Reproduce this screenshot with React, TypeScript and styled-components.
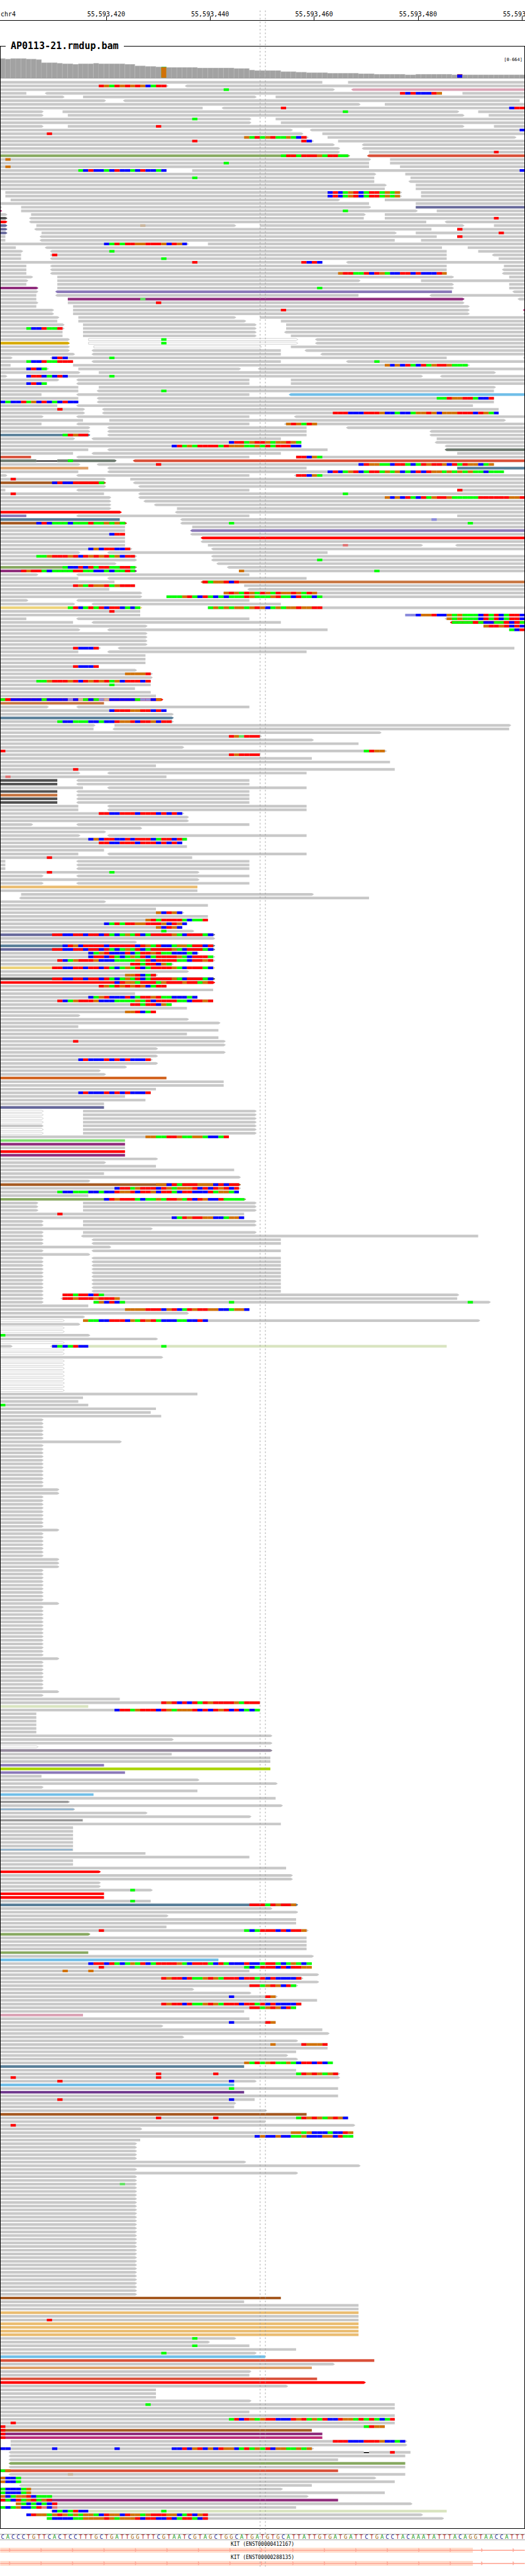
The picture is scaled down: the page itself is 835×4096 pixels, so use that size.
import React from 'react';
import styled, { createGlobalStyle } from 'styled-components';

const GlobalStyle = createGlobalStyle`
  * { box-sizing: border-box; }
  body {
    margin: 0;
    background: #fff;
    color: #000;
    font-family: "DejaVu Sans Mono", "Liberation Mono", monospace;
  }
`;

const Page = styled.main`
  position: relative;
  width: 100%;
  overflow: hidden;
  padding-bottom: 16px;
`;

const Ruler = styled.header`
  display: grid;
  grid-template-columns: 10.32% repeat(5, 19.8%);
  height: 33px;
  padding-top: 17px;
  border-bottom: 1px solid #000;
  overflow: hidden;
  font-size: 10px;
  line-height: 12px;
`;

const Chromosome = styled.span`
  padding-left: 1px;
`;

const Tick = styled.span`
  position: relative;
  text-align: center;

  &::after {
    content: "";
    position: absolute;
    left: 50%;
    bottom: 0;
    width: 1px;
    height: 6px;
    background: #000;
  }
`;

const Track = styled.fieldset`
  position: relative;
  min-width: 0;
  margin: 31px 0 0;
  padding: 0;
  border: 1px solid #000;
`;

const TrackName = styled.legend`
  margin-left: 8px;
  padding: 0 8px;
  font-size: 15px;
  font-weight: 700;
  line-height: 18px;
`;

const Range = styled.span`
  position: absolute;
  top: 8px;
  right: 3px;
  font-size: 7px;
  line-height: 10px;
`;

const Chart = styled.svg`
  display: block;
  width: 100%;
  height: auto;
`;

const Guides = styled.svg`
  position: absolute;
  top: 0;
  left: 0;
  width: 100%;
  height: auto;
  pointer-events: none;
`;

const Sequence = styled.div`
  display: grid;
  grid-template-columns: repeat(101, 1fr);
  margin-top: 8px;
  border-top: 1px solid #a6a6a6;
  border-bottom: 1px solid #a6a6a6;
  font-size: 9px;
  line-height: 8px;
  text-align: center;
`;

const Base = styled.span<{ $base: string }>`
  min-width: 0;
  color: ${({ $base }) => SEQUENCE_COLORS[$base]};
`;

const Genes = styled.section`
  display: flex;
  flex-direction: column;
  gap: 3px;
  margin-top: 2px;
`;

const Gene = styled.div`
  font-size: 8px;
  line-height: 10px;
  text-align: center;
`;

const SEQUENCE_COLORS: Record<string, string> = {
  A: '#139a13',
  C: '#14148c',
  G: '#a4660c',
  T: '#b01414',
};

const MISMATCH_COLORS: Record<string, string> = {
  A: '#00ff00',
  C: '#0000ff',
  G: '#d17105',
  T: '#ff0000',
  a: '#64e464',
  c: '#8c8cdc',
  g: '#c9b59c',
  t: '#e07676',
};

const PLAIN = '#c8c8c8';

const READ_COLORS: Record<string, string> = {
  pink: '#dba3b5',
  tomato: '#d94f38',
  green: '#87a960',
  slate: '#66689b',
  dark: '#525252',
  red: '#ff0000',
  violet: '#8a78b8',
  plum: '#8f2d7c',
  rose: '#bc2e78',
  gold: '#d6a900',
  steel: '#597f99',
  moss: '#6d7a6f',
  peach: '#dea068',
  brown: '#a55a22',
  copper: '#c7743f',
  yellow: '#edd37a',
  sand: '#eabc70',
  rust: '#d26522',
  mint: '#80df70',
  pale: '#d9e4c0',
  sky: '#6fbee8',
  mauve: '#94899c',
  lime: '#aad400',
  purple: '#6e368c',
};

// Reads drawn with a plain outline round another fill.
const OUTLINED: Record<string, string> = {
  open: '#ffffff',
  ash: '#8f8f8f',
  ice: '#90b4d0',
};

// One line per pileup row. "a-b" is a read from base a to base b, with < or >
// for its direction and :name for its colour; "a~b" is a deletion; "@kXYZ"
// puts mismatched bases from base k on; "nx" repeats the row n times.
const PILEUP = `
0-62 67-101
0-32> <36-101 @19TGATGTGTGCATT
0-64> <68-101:pink @43A
0-5 <9-85 89-101 @77TCTCCCTG
0-12> 16-49> 53-101
0-20> <24-100
0-69> 74-101
0-39 <43-101 @54T @98CTT
0-8> 12-88> 92-101 @66A
0-8> 13-89> 94-101
0-48> 53-101 @37A
0-48> 54-101
0-8> 13-89> 95-101 @30T
0-56> <60-101 @100C
0-58> 62-101 @9T
0-59> 63-99> @47GATAGTAAGACT
0-60> 65-101 @37T @58TC
0-64> <70-101
0-65> <70-101
0-65> 71-101 @95T
0-67>:green <71-101:tomato @54ATTATTTGATTAA
0-71> 75-101 @1G
0-71 75-101 @43A
0-71 77-101 @1G
0-32 37-101 @15ACTCCACTCCACTCCAC @100C
0-72> 78-101
0-72 79-101 @37A
0-72 <79-101
0-74> 80-101
0-74 80-101
2x 1-77> 81-101 @63CTCAGTCATTAGAG
2-65> 74-101
0-71 80-101
0-0> 4-71> 80-101:slate
0-0>:rose 4-80> 84-101 @66A
0-1> 6-70> 74-101
0-1>:dark <6-70 74-101 @95T
0-1>:red <6-82 <86-101
0-1>:slate 7-45> 50-89> 95-101 @27g
0-1>:slate <7-83 88-101 @88T
0-1>:slate 8-76> 80-101 @96T
0-1 <8-84 88-101 @88T
0-1 <8-76 81-101
0-36> 40-101 @20CATATTGGTTTGCTGC
0-3 <9-85 90-101
0-4> <10-86 92-101 @21A
0-4 <10-86 <95-101 @10T
0-4 <10-86 96-101 @31A
0-62 <67-101 @37T @58TCTC
0-5 <10-86 97-101
0-5 <10-86 <97-101
0-5 <10-86 <97-101 @65GTTAATCTGACCTTCTCCCTG
0-6> 11-87> 98-101
0-5> 11-69> 81-101
0-5 11-87> 98-101
0-7>:plum 11-87> 98-101 @61A
0-7> <11-87:violet <99-101
0-7 <11-69 <83-101
0-7 13-89>:plum <100-101 @27a
0-7> 13-89> @30T
0-7 14-90>
0-10> 14-90> <101-101:rose @54T
0-10> 14-90> <101-101
0-11> 15-45> 50-101
0-11 15-47> 54-101
0-12> 16-49> 55-101
0-12> 16-49> 55-101 @5ACCTAAT
0-12 16-49> <55-101
0-12 16-49> 56-101
0-13> 17-57>:open <61-101 @31A
0-13>:gold 17-57>:open <61-101 @31A
0-13> 18-50>:open 56-101
0-13> <18-54 <59-101
0-14> <18-54 <62-101
0-2> <10-86 <101-101 @10CTC @21A
0-14 <18-54 <67-101 @5ACCTAATTT @72A
0-2 14-90> @74GCGCTACTAGTTGAAA
0-9> 15-46> <50-101 @5CTCA
0-15> 19-95>
0-1> 5-81> <85-101 @5CTTCACTC @21A
0-11> <15-48 56-101
0-9 <15-48 56-101 @5CTCA
0-15 19-95>
0-15 <19-95 @31A
0-8 <15-48 <56-101:sky
0-15 <19-95 @84AATGGTTACCT
0-15 <19-95 @0CACCTAGCTCACTCC
0-11 <15-91
0-16> <20-96 @11T
0-16> <20-96 @64TTTCCCTTTGCCACCAGGTGCGGGTTTCTGAC
0-8> <15-48 <57-101
0-16 21-97>
0-8 <15-48 <55-101 @55GTGATG
0-17> <21-59 <67-101
0-17> <21-59 <83-101
0-17>:steel <21-59 <83-101 @12ATGTT
0-14> <18-54 84-101
0-58 <84-101 @44CTTAGTTGAGGTGA
0-58 <86-101 @33CTAGATTTTATGGGAAGATATTTCC
0-17 <21-63 <86-101:moss
0-14 <18-54 88-101
0-6:tomato <15-48 57-101 @57TTCGA
0-7:moss 7~11 11-22>:moss <26-101:tomato @13A
0-15> <19-95 @30T @69CTGGAACTTACATGTTGCTATGGCAG
0-17:peach <21-59 88-101:steel
0-15 <21-97 @63CTCAGTCATTAGAGCACTCTGGAGAGAGAACAAA
0-1> <15-48 <57-101 @57TTCGA
0-20> 25-101 @2T
0-20>:brown <26-101 @10CTCCTTTTTA
0-20> <27-101
0-1 <15-48 88-101 @88T
0-20 <27-101 @2T @66A
0-21> <27-101 @74GCGCTACTAGTTGAAAAATTTTTTGGT
0-21> <28-101
0-21> <30-101
0-21> 34-101
0-23>:red <34-101
0-5:violet <15-48 88-101
0-23:steel <35-101 @83c
0-24>:brown <35-101 @7CTCAAACAAATAAGAGA @44A @90A
0-24 37-101
0-24 <37-101:violet
0-24 <37-101 @21CTT
0-24 <39-101:red
0-24 <39-101
0-24 40-81> <88-101 @66t
0-25> <41-101 @17CGCTTCCT
0-15> <21-63
0-26> <41-101 @7AAGTTTGTCTGTGTAGCTT
0-26> <41-101 @61A
0-22> <42-101
0-26>:green <44-101 @12ACCTCTATTAATTA
0-26>:plum 46-101 @4TGTTACAAAATTAACCACAATA @46G @72A
0-7> <15-48
0-15 <21-59
0-22 <39-101:copper @39TAGGTCT
0-26 47-101 @14TGATGGTAGTTT
0-21 <48-101
0-27> 43-101 @43GTGATGATGATGGTGATG
0-27> 32-101 @32AAAGTACTACACAAATGAAAGTAACTAACA
0-5> <15-48
0-14> <18-54
0-27>:yellow 40-101 @13ATCATATCTTCACA @40AGAGAGGAGTGCAGAGGTGGTT
0-27 @21T
0-27 78-101 @78ccCGGTCCGAGAAACTATCATTC
0-5 <15-48 <86-101 @86GAGAAACTATCATTC
0-14 <18-54 <87-101:red @87AAAATACCAATCTA
0-28> 93-101 @93GTTGTCTC
0-15> <21-63 98-101 @98ACT
4x 0-28>
0-19> <23-99 @14TCCCT
0-15 <21-59
3x 0-28
0-19 @14TCCCT
0-26>
0-29> @24GGGGT
0-29>
0-29 @7AAGTTTGTCTGTGTAGCTTTCT
0-29 @21A
0-26
0-29
0-30
0-31>:red @0ATCCCCCCACCCCcCgACAcgCCCCCAccCG
0-20:copper
0-9> <15-48
0-32 @21CTTTGGTTCTC
0-33>
0-33>:steel
0-33> @11ACCAAACCACCTGGTCTTGCTT
0-18> 22-98>
0-18 <22-98
0-73>
0-50> @44TGaTTT
0-60>
0-69
0-35>
0-74> @0T @70ATGG
0-50 @44TGTTTT
0-60
0-75
0-30
0-76 @14T
0-15> <21-59
0-32 @1t
2x 0-11:dark <15-48
0-16 <21-59
0-11:dark <15-48
0-11:copper <15-48
2x 0-11:dark <15-48
2x 0-15 <21-59
0-35> @19TTCCTTTCTTTCTCTC
2x 0-36>
0-6> <15-48
0-27>
0-20>
0-15> <21-59
0-36 @17CGCTTCCTCTTTCATTCTA
0-35 @19TTCCTTTCTTTCTCTC
0-36
0-20
0-15 <21-59
0-37 @9T
3x 0-1 <15-48
0-38> @9T @21A
0-8> <15-48
0-38>
0-8> <15-48
0-38:sand
0-38
4-60>
<4-71
0-20>
0-40
0-30
0-35> @30GCTGC
0-40
0-40 @28GTATTTTACAAT
0-36 @20CATATTGGTTTGCTGC
0-35 @30GCTGC
0-37> @31A
0-41>:slate @10TTCCTTCTTCTACAGATCATTTTGACTTTAC
0-41>
0-26>
0-41>:steel @12CTGCTTTTCTTTTTCTGATCCAGGATTCT
0-41>:slate @10TTCCTTCTTCTACAGATCATTTTGACTTTAC
0-38> @17CAGTCCCTCATTGTAACCCAC
0-41> @17CTTCTACAGATCATTTTGACTTTA
0-41> @11TCAGTTTGCCCAAAAGATCTTTTAACTTGT
0-33> @25TTATTCGA
0-41>:yellow @10TTCCTTCTTCTACAGATCATTTTGACTTTAC
0-36>
0-30> @24GGTCAT
0-41>:dark @10TTCCTTCTTCTACAGATCATTTTGACTTTAC
0-41>:red @22CTGGATTTAGTTTGTTAGT
0-32 @19TGATGTGTGCATT
0-41
0-26
0-38 @17CAGTCCCTCATTGTAACCCAC
0-41 @11TCAGTTTGCCCAAAAGATCTTTTAACTTGT
0-33 @25TTATTCGA
0-36
0-30 @24GGTCAT
0-15>
0-36>
0-42>
0-15
0-42
0-36
0-42
0-43> @14T
0-43>
0-30>
0-43>
0-30>
0-29> @15CTCCCTCTCTCCCT
0-30>
0-24>
0-19>
0-20>
0-32:rust
2x 0-43
0-30
0-29 @15CTCCCTCTCTCCCT
0-24
0-28
0-20
0-20:slate
4x 0-8>:open 16-49>
0-8> 16-49>
2x 0-8>:open 16-49>
0-44 @28GGAATTGAAGGACCAT
0-24:mint
0-24:plum
0-24
0-24:red
0-24:plum
0-30>
0-20>
0-30
0-45
0-20
0-46>
0-17>
0-46>:brown @30GGCTATTTGGGCTCTT
0-46> @22CTTAGTTTCTGAGGGTCTCTGTCT
0-46 @11ACCAAACCACCTGGTCTTGCTTACTTCCCTAGGAC
0-17
0-47>:green @20CTGTTTACAAGATTGATCTGCCTAAAA
3x 0-7> 16-49>
0-47 @11T
0-47 @33CATGTTGGCCAGGC
2x 0-8> 16-49>
0-29>
0-8> 16-49>
0-8> <16-92
2x 0-8> <18-54
0-21>
0-8> <18-54
0-17>
10x 0-8> <18-54
0-8> 12-88> @12TTATTCTA
0-8> <12-88 @12TTGTTTGTTTG
0-8> 18-94> @18AGCTCA @44A @90A
0-17
0-48 @24GGGGTTTCGTCATGTTGGCCAGGC
0-36>
0-16>
0-12>:open 16-92> @16GAACCTTTCGATGTACCCAACCTC
0-15>
2x 0-12>:open
0-17> @0A
0-30>
0-12>:open
0-2> <10-86:pale @10CACATCC @31A
2x 0-12>:open
0-31>
9x 0-12>:open
0-38
0-16
0-15
0-17 @0A
0-30
0-29
0-31
6x 0-8>
0-23>
12x 0-8>
2x 0-11>
9x 0-8>
0-11>
7x 0-8>
3x 0-11>
9x 0-8>
0-11>
14x 0-8>
0-11>
8x 0-8>
0-11>
0-8>
0-23
0-50 @31TGTCTCTATGTTTTGATTT
0-17:pale
0-50 @22CTTAGTTTCTGAGGGTCTCTGTCTCACA
6x 0-7
0-52>
0-33>
0-52>
0-7>:open
0-52>:mauve
0-33
2x 0-52
0-20:violet
0-52:lime
0-24:violet
0-8
0-38>
0-53>
0-8>
0-38
0-18:sky
0-53
0-13>:ash
0-54>
0-14>:ice
0-28>
0-48>
0-16:ash
0-54
6x 0-14
0-14:ice
0-28
0-48
2x 0-14
0-55
0-19>:red
2x 0-56>
2x 0-19>
0-29> @25A
2x 0-20:red
0-29 @25A
0-57>:steel @48TTTATGTTG
0-52>
0-57>
0-32>
2x 0-57
0-32
0-59> @19T @47ACATTTCTCTTG
0-17>:green
4x 0-59
0-17:green
0-60>
0-42:sky
0-60 @17CTTCTACAGATCATTTTGACTTTACTACCCTCCATTACAGACA
0-60 @19T @47ACATTTCTCTTGG
0-48 @12G @17G
0-61>
0-58> @31TGTTCTAAGTGATTTCTTATCTCCCCT
0-61>
0-57> @48TTAGTGCTA
0-37>
0-48>
0-53> @44C @51TG
0-61
0-58 @31TGTTCTAAGTGATTTCTTATCTCCCCT
0-57 @48TTAGTGCTA
0-47
0-16:pink
0-48
0-53 @44C @51TG
0-31>
0-62
0-63>
0-35>
0-57>
0-63 @52G @58TGGGT
0-63
0-57
0-55>
0-57>
0-64 @47GATAGTAAGACTTCTCA
0-47:steel
0-57
0-65> @30T @41T @57ATGTGAGT
0-65> @2T @30T
0-49> @11T @44C
0-45:sky
0-65 @44A
0-47:purple
0-65
0-49 @11T @44C
0-45>
0-45
0-51>
0-59:brown
0-67 @30T @41T @57ATGTGAGTGC
0-51
0-68> @2T
0-27>
0-68 @56GGAGCCCACCTG
0-68 @49CGCCGCCAAGCCCGGCTAA
0-27
5x 0-26>
0-47>
0-69>
0-26>
0-57>
2x 0-26>
0-26> @23a
30x 0-26>
0-54:brown
0-47
2x 0-69
0-69:sand
0-69
0-69 @9T
4x 0-69:sand
0-45> @37A
0-40>
0-48 @37A
0-57
0-49> @31A
0-51:sky
0-72:tomato
0-64>
0-60:peach
0-48>
0-48
0-61:tomato
0-70>:red
0-55>
3x 0-30
0-48>
0-76 @28A
0-76
0-48
0-76
0-76 @44ATCTGAGTTCCCTGTAGATCCTGGATATACAT
0-76 @2T
0-74 @0T @70ATGG
0-60:brown @0T
0-62:plum @0T
0-62:rose @0T
2-78> @64TTTCCCTTTGCCAC
2-78>
0-60> @0CC @10C @22C @33CCTCGTCGCTGGCATAGATCGGAAGAG
<2-70 70~71 71-79 @75T
<2-78
<2-65
<2-78:green
<2-78
0-65:tomato @0AG
<2-78 @13g
0-72> @0GCCA
0-76 @0GCCA
<4-60
0-54> @0ACCCAG
0-74 @0ACCCAG
0-59> @0GCAGGTCAAA
0-65:plum @0TACTAGTAGT
3-79> @3GACACACT
0-57 @0ACAGCCATtCt
<10-86:pale @10CACATCC @31A
5-81> @5CTGGAGTGAGAGGACTGGCTGGAGTTTGGCATCGT
9-85> @9ACCCCAAGGGGTGAGGGTCTTCCTCATTACT
`;

const ROWS: string[][] = PILEUP.trim()
  .split('\n')
  .flatMap((line) => {
    const tokens = line.split(' ');
    const repeat = /^(\d+)x$/.exec(tokens[0]);
    return repeat
      ? Array.from({ length: Number(repeat[1]) }, () => tokens.slice(1))
      : [tokens];
  });

// [height, number of bases] runs of the coverage histogram.
const COVERAGE = [
  [37, 1], [36, 1], [37, 3], [36, 2], [35, 1], [29, 3], [28, 1], [27, 2], [26, 1],
  [27, 3], [28, 1], [27, 5], [26, 2], [23, 2], [22, 2], [21, 2], [20, 6], [19, 7],
  [18, 3], [15, 1], [14, 5], [12, 3], [11, 2], [10, 4], [9, 6], [8, 3], [7, 6],
  [6, 2], [7, 7], [6, 1], [7, 1], [6, 12],
].flatMap(([height, count]) => Array.from({ length: count }, () => height));

const VARIANTS: Record<number, { fill: string; tip: string }> = {
  31: { fill: '#d17105', tip: '#2fae2f' },
  88: { fill: '#0000ff', tip: '#c03030' },
};

const REFERENCE =
  'CACCCTGTTCACTCCTTTGCTGATTGGTTTCGTAATCGTAGCTGGCATGATGTGCATTATTGTGATGATTCTGACCTACAAATATTTACAGGTAACCATTT';

const TOP = 98;
const BASELINE = 148;
const FIRST_ROW = 154;
const ROW_PITCH = 7;
const READ_HEIGHT = 5;

const baseX = (k: number) => Math.round(k * 9.9);

function readPath(x1: number, x2: number, y: number, left: boolean, right: boolean, inset = 0) {
  const t = y + inset;
  const b = y + READ_HEIGHT - inset;
  const m = y + READ_HEIGHT / 2;
  const head = right
    ? `L${x2} ${t}L${x2 + 2} ${t + 1}L${x2 + 4 - inset} ${m}L${x2 + 2} ${b - 1}L${x2} ${b}`
    : `L${x2 - inset} ${t}L${x2 - inset} ${b}`;
  const tail = left ? `L${x1} ${b}L${x1 - 2} ${b - 1}L${x1 - 4} ${m}L${x1 - 2} ${t + 1}Z` : `L${x1 + inset} ${b}Z`;
  return `M${left ? x1 : x1 + inset} ${t}${head}${tail}`;
}

function PileupRow({ tokens, y }: { tokens: string[]; y: number }) {
  return (
    <g>
      {tokens.map((token, i) => {
        const mismatch = /^@(\d+)([A-Za-z]+)$/.exec(token);
        if (mismatch) {
          const start = Number(mismatch[1]);
          return mismatch[2].split('').map((base, j) => {
            const x = baseX(start + j);
            return (
              <rect
                key={`${i}-${j}`}
                x={x}
                y={y}
                width={baseX(start + j + 1) - x}
                height={READ_HEIGHT}
                fill={MISMATCH_COLORS[base]}
              />
            );
          });
        }
        const deletion = /^(\d+)~(\d+)$/.exec(token);
        if (deletion) {
          const x = baseX(Number(deletion[1]));
          return <rect key={i} x={x} y={y + 2} width={baseX(Number(deletion[2])) - x} height={2} fill="#000" />;
        }
        const read = /^(<?)(\d+)-(\d+)(>?)(?::(\w+))?$/.exec(token);
        if (!read) return null;
        const [, left, from, to, right, name = ''] = read;
        const outlined = OUTLINED[name];
        return (
          <path
            key={i}
            d={readPath(baseX(Number(from)), baseX(Number(to)), y, !!left, !!right, outlined ? 0.5 : 0)}
            fill={outlined ?? READ_COLORS[name] ?? PLAIN}
            stroke={outlined ? PLAIN : undefined}
            strokeWidth={outlined ? 1 : undefined}
          />
        );
      })}
    </g>
  );
}

function Coverage() {
  return (
    <g>
      {COVERAGE.map((height, k) => {
        const x = baseX(k);
        const width = baseX(k + 1) - x;
        const variant = VARIANTS[k];
        return (
          <g key={k}>
            <rect x={x} y={BASELINE - height} width={width} height={height} fill={variant ? variant.tip : '#b2b2b2'} />
            <rect
              x={x}
              y={BASELINE - height + 1}
              width={variant ? width : width - 1}
              height={height - 1}
              fill={variant ? variant.fill : '#a2a2a2'}
            />
          </g>
        );
      })}
      <rect x={0} y={BASELINE} width={1000} height={1} fill="#7c7c7c" />
    </g>
  );
}

function Pileup() {
  return (
    <Chart viewBox={`1 ${TOP} 998 ${4816 - TOP}`} role="img" aria-label="Read coverage and alignments">
      <Coverage />
      {ROWS.map((tokens, n) => (
        <PileupRow key={n} tokens={tokens} y={FIRST_ROW + n * ROW_PITCH} />
      ))}
    </Chart>
  );
}

const EXON_ARROWS = Array.from({ length: 17 }, (_, i) => 17 + i * 60);

function Transcript({ label }: { label: string }) {
  return (
    <Gene>
      <div>{label}</div>
      <Chart viewBox="0 0 1000 10" aria-hidden="true">
        <rect x={0} y={0} width={901} height={9.5} fill="#ffddcc" />
        <rect x={0} y={4} width={1000} height={2} fill="#ffa898" />
        {EXON_ARROWS.map((x) => (
          <path key={x} d={`M${x} 1L${x + 1} 1L${x + 3} 5L${x + 1} 8L${x} 8Z`} fill="#ffa898" />
        ))}
      </Chart>
    </Gene>
  );
}

const POSITIONS = ['55,593,420', '55,593,440', '55,593,460', '55,593,480', '55,593,500'];

export default function App() {
  return (
    <Page>
      <GlobalStyle />
      <Ruler>
        <Chromosome>chr4</Chromosome>
        {POSITIONS.map((position) => (
          <Tick key={position}>{position}</Tick>
        ))}
      </Ruler>
      <Track>
        <TrackName>AP0113-21.rmdup.bam</TrackName>
        <Pileup />
        <Range>[0-664]</Range>
      </Track>
      <Sequence>
        {REFERENCE.split('').map((base, i) => (
          <Base key={i} $base={base}>
            {base}
          </Base>
        ))}
      </Sequence>
      <Genes>
        <Transcript label="KIT (ENST00000412167)" />
        <Transcript label="KIT (ENST00000288135)" />
      </Genes>
      <Guides viewBox="0 0 1000 4888" aria-hidden="true">
        <path d="M495.5 20V4888M505.5 20V4888" stroke="#999" strokeWidth={1} strokeDasharray="3 4" fill="none" />
      </Guides>
    </Page>
  );
}
